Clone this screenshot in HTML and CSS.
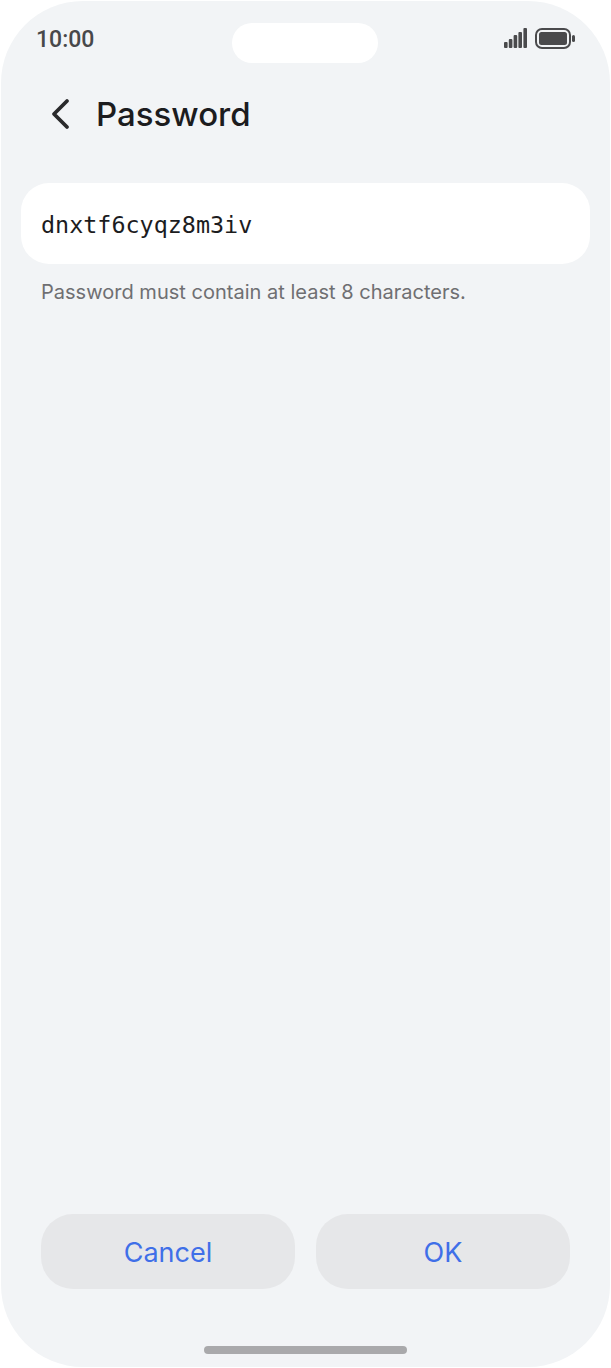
FILE: index.html
```html
<!DOCTYPE html>
<html lang="en">
<head>
  <meta charset="UTF-8" />
  <meta name="viewport" content="width=device-width, initial-scale=1.0"/>
  <title>Password</title>
  <link rel="stylesheet" href="styles.css">
</head>
<body>
  <div class="screen">
    <div class="status-bar">
      <span class="time">10:00</span>
      <div class="status-icons">
        <svg class="signal" width="23" height="20" viewBox="0 0 23 20">
          <rect x="0" y="14" width="3.6" height="6" rx="1"/>
          <rect x="4.8" y="11" width="3.6" height="9" rx="1"/>
          <rect x="9.6" y="7" width="3.6" height="13" rx="1"/>
          <rect x="14.4" y="4" width="3.6" height="16" rx="1"/>
          <rect x="19.4" y="0" width="3.6" height="20" rx="1"/>
        </svg>
        <svg class="battery" width="40" height="21" viewBox="0 0 40 21">
          <rect x="1" y="1" width="34" height="19" rx="6" fill="none" stroke="#4a4a4c" stroke-width="2"/>
          <rect x="4" y="4" width="28" height="13" rx="2.5"/>
          <rect x="37" y="7" width="3" height="7" rx="1.5"/>
        </svg>
      </div>
    </div>
    <div class="camera-pill"></div>

    <div class="header">
      <svg class="back" width="22" height="32" viewBox="0 0 22 32">
        <path d="M18 3 L5 16 L18 29" fill="none" stroke="#2a2a2c" stroke-width="3.8" stroke-linecap="round" stroke-linejoin="round"/>
      </svg>
      <h1>Password</h1>
    </div>

    <div class="field">dnxtf6cyqz8m3iv</div>
    <p class="hint">Password must contain at least 8 characters.</p>

    <div class="actions">
      <button class="btn">Cancel</button>
      <button class="btn">OK</button>
    </div>
    <div class="home-wrap"><div class="home-bar"></div></div>
  </div>
</body>
</html>
```

FILE: styles.css
```css
* {
  box-sizing: border-box;
}

html, body {
  height: 100%;
}

body {
  margin: 0;
  padding: 1px;
  background: #fff;
  font-family: 'Inter', 'Roboto', sans-serif;
  overflow: hidden;
}

.screen {
  position: relative;
  display: flex;
  flex-direction: column;
  height: 1366px;
  background: #f2f4f6;
  border-radius: 82px;
  overflow: hidden;
}

.status-bar {
  display: flex;
  justify-content: space-between;
  align-items: center;
  height: 40px;
  margin-top: 18px;
  padding: 0 35px;
}

.time {
  font-family: 'Roboto', sans-serif;
  font-size: 23px;
  font-weight: 500;
  color: #48484a;
}

.status-icons {
  display: flex;
  align-items: center;
  gap: 8px;
  margin-top: -2px;
  fill: #4a4a4c;
}

.camera-pill {
  position: absolute;
  top: 22px;
  left: 231px;
  width: 146px;
  height: 40px;
  background: #fff;
  border-radius: 20px;
}

.header {
  display: flex;
  align-items: center;
  gap: 25px;
  height: 40px;
  margin-top: 35px;
  padding-left: 48px;
}

.header h1 {
  margin: 0;
  font-size: 33px;
  font-weight: 500;
  color: #1c1c1e;
}

.field {
  display: flex;
  align-items: center;
  height: 81px;
  margin: 49px 20px 0;
  padding: 2px 20px 0;
  background: #fff;
  border-radius: 28px;
  font-family: 'DejaVu Sans Mono', monospace;
  font-size: 23.4px;
  color: #1c1c1e;
}

.hint {
  margin: 15px 0 0;
  padding-left: 40px;
  font-size: 20.05px;
  line-height: 26px;
  color: #6f6f72;
}

.actions {
  display: flex;
  gap: 21px;
  margin-top: auto;
  padding: 0 40px;
}

.btn {
  flex: 1;
  height: 75px;
  padding-top: 3px;
  border: none;
  border-radius: 32px;
  background: #e6e7e9;
  font-family: inherit;
  font-size: 27px;
  color: #3f6fe8;
}

.home-wrap {
  display: flex;
  justify-content: center;
  padding: 57px 0 13px;
}

.home-bar {
  width: 203px;
  height: 8px;
  margin-right: 1px;
  border-radius: 4px;
  background: #a9a9ab;
}
```
